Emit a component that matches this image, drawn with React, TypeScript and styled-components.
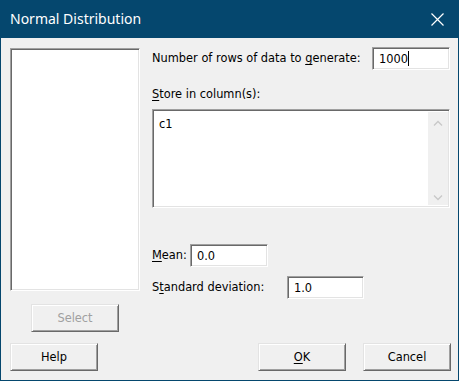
import React from "react";
import styled, { createGlobalStyle } from "styled-components";

const Global = createGlobalStyle`
  html, body { margin: 0; padding: 0; background: #f0f0f0; }
  body { font-family: "DejaVu Sans", "Liberation Sans", sans-serif; font-size: 11.4px; color: #000; }
  * { box-sizing: border-box; }
`;

const Window = styled.div`
  width: 459px;
  height: 381px;
  display: flex;
  flex-direction: column;
  background: #f0f0f0;
  border: 1px solid #05476e;
  border-top: none;
`;

const TitleBar = styled.div`
  height: 38px;
  flex: none;
  background: #05476e;
  display: flex;
  align-items: center;
  justify-content: space-between;
  padding: 0 15px 0 10px;
  margin: 0 -1px;
  color: #fff;
  font-family: "Noto Sans", "Open Sans", sans-serif;
  font-size: 14px;
`;

const Title = styled.span`
  padding-bottom: 1px;
`;

const Body = styled.div`
  flex: 1;
  display: flex;
  flex-direction: column;
  padding: 10px 7px 0 9px;
`;

const Main = styled.div`
  display: flex;
  gap: 12px;
  height: 284px;
`;

const LeftCol = styled.div`
  width: 130px;
  display: flex;
  flex-direction: column;
  align-items: center;
`;

const sunken = `
  background: #fff;
  border: 1px solid;
  border-color: #a0a0a0 #fff #fff #a0a0a0;
  box-shadow: inset 1px 1px 0 #696969, inset -1px -1px 0 #e3e3e3;
`;

const ListBox = styled.div`
  ${sunken}
  width: 130px;
  height: 243px;
`;

const Button = styled.button<{ $disabled?: boolean }>`
  width: 88px;
  height: 28px;
  flex: none;
  padding: 0;
  background: #f0f0f0;
  border: 1px solid;
  border-color: #e3e3e3 #696969 #696969 #e3e3e3;
  box-shadow: inset 1px 1px 0 #fff, inset -1px -1px 0 #a0a0a0;
  font-family: "DejaVu Sans", "Liberation Sans", sans-serif;
  font-size: 11.4px;
  color: ${(p) => (p.$disabled ? "#a0a0a0" : "#000")};
`;

const SelectButton = styled(Button)`
  margin-top: 13px;
`;

const RightCol = styled.div`
  flex: 1;
  display: flex;
  flex-direction: column;
  padding-right: 1px;
`;

const Row = styled.div<{ $top?: number }>`
  display: flex;
  align-items: center;
  margin-top: ${(p) => p.$top ?? 0}px;
`;

const FirstRow = styled(Row)`
  justify-content: space-between;
  margin-top: -1px;
`;

const Label = styled.span<{ $w?: number }>`
  white-space: nowrap;
  line-height: 13px;
  ${(p) => (p.$w ? `width: ${p.$w}px; flex: none;` : "")}
`;

const U = styled.span`
  text-decoration: underline;
  text-underline-offset: 2px;
`;

const TextField = styled.div<{ $w: number }>`
  ${sunken}
  width: ${(p) => p.$w}px;
  height: 23px;
  padding: 4px 0 0 6px;
  display: flex;
  align-items: flex-start;
`;

const Caret = styled.span`
  width: 1px;
  height: 15px;
  margin-top: -1px;
  background: #000;
`;

const StoreLabel = styled(Label)`
  margin-top: 18px;
`;

const StoreBox = styled.div`
  ${sunken}
  margin-top: 8px;
  height: 99px;
  display: flex;
  padding: 2px 1px 2px 2px;
`;

const StoreText = styled.div`
  flex: 1;
  padding: 5px 0 0 4px;
`;

const ScrollBar = styled.div`
  width: 20px;
  background: #f0f0f0;
  display: flex;
  flex-direction: column;
  justify-content: space-between;
  align-items: center;
  padding: 8px 0 4px;
`;

const Footer = styled.div`
  display: flex;
  align-items: center;
  padding-top: 11px;
`;

const OkButton = styled(Button)`
  margin-left: auto;
`;

const CancelButton = styled(Button)`
  margin-left: 17px;
`;

const Chevron = ({ up }: { up?: boolean }) => (
  <svg width="10" height="6" viewBox="0 0 10 6">
    <path
      d={up ? "M1 5.5 L5 1.5 L9 5.5" : "M1 0.5 L5 4.5 L9 0.5"}
      fill="none"
      stroke="#c8c8c8"
      strokeWidth="1.3"
    />
  </svg>
);

export default function App() {
  return (
    <>
      <Global />
      <Window>
        <TitleBar>
          <Title>Normal Distribution</Title>
          <svg width="13" height="13" viewBox="0 0 13 13">
            <path d="M0.5 0.5 L12.5 12.5 M12.5 0.5 L0.5 12.5" stroke="#fff" strokeWidth="1.2" />
          </svg>
        </TitleBar>
        <Body>
          <Main>
            <LeftCol>
              <ListBox />
              <SelectButton $disabled>Select</SelectButton>
            </LeftCol>
            <RightCol>
              <FirstRow>
                <Label>
                  Number of rows of data to <U>g</U>enerate:
                </Label>
                <TextField $w={78}>
                  1000
                  <Caret />
                </TextField>
              </FirstRow>
              <StoreLabel>
                <U>S</U>tore in column(s):
              </StoreLabel>
              <StoreBox>
                <StoreText>c1</StoreText>
                <ScrollBar>
                  <Chevron up />
                  <Chevron />
                </ScrollBar>
              </StoreBox>
              <Row $top={36}>
                <Label $w={38}>
                  <U>M</U>ean:
                </Label>
                <TextField $w={78}>0.0</TextField>
              </Row>
              <Row $top={9}>
                <Label $w={135}>
                  S<U>t</U>andard deviation:
                </Label>
                <TextField $w={77}>1.0</TextField>
              </Row>
            </RightCol>
          </Main>
          <Footer>
            <Button>Help</Button>
            <OkButton>
              <U>O</U>K
            </OkButton>
            <CancelButton>Cancel</CancelButton>
          </Footer>
        </Body>
      </Window>
    </>
  );
}
